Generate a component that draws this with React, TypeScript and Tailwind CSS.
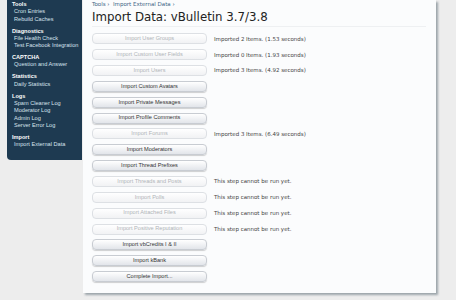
const sidebar = [
  { title: "Tools", items: ["Cron Entries", "Rebuild Caches"] },
  { title: "Diagnostics", items: ["File Health Check", "Test Facebook Integration"] },
  { title: "CAPTCHA", items: ["Question and Answer"] },
  { title: "Statistics", items: ["Daily Statistics"] },
  { title: "Logs", items: ["Spam Cleaner Log", "Moderator Log", "Admin Log", "Server Error Log"] },
  { title: "Import", items: ["Import External Data"] },
];

const steps: { label: string; enabled: boolean; note?: string }[] = [
  { label: "Import User Groups", enabled: false, note: "Imported 2 Items. (1.53 seconds)" },
  { label: "Import Custom User Fields", enabled: false, note: "Imported 0 Items. (1.93 seconds)" },
  { label: "Import Users", enabled: false, note: "Imported 3 Items. (4.92 seconds)" },
  { label: "Import Custom Avatars", enabled: true },
  { label: "Import Private Messages", enabled: true },
  { label: "Import Profile Comments", enabled: true },
  { label: "Import Forums", enabled: false, note: "Imported 3 Items. (6.49 seconds)" },
  { label: "Import Moderators", enabled: true },
  { label: "Import Thread Prefixes", enabled: true },
  { label: "Import Threads and Posts", enabled: false, note: "This step cannot be run yet." },
  { label: "Import Polls", enabled: false, note: "This step cannot be run yet." },
  { label: "Import Attached Files", enabled: false, note: "This step cannot be run yet." },
  { label: "Import Positive Reputation", enabled: false, note: "This step cannot be run yet." },
  { label: "Import vbCredits I & II", enabled: true },
  { label: "Import kBank", enabled: true },
  { label: "Complete Import...", enabled: true },
];

const narrow = { fontFamily: '"Liberation Sans", Arial, sans-serif' };

export default function App() {
  return (
    <div
      className="w-[456px] h-[300px] overflow-hidden bg-[#ededed] flex items-start pl-[7px]"
      style={{ fontFamily: '"DejaVu Sans", "Liberation Sans", sans-serif' }}
    >
      {/* Admin sidebar */}
      <nav
        className="w-[75px] h-[160px] shrink-0 bg-[#1e3a51] rounded-bl-[4px] pl-[5px] pt-[1px] text-[5.6px]"
        style={narrow}
      >
        {sidebar.map((group) => (
          <div key={group.title} className="mb-[4.7px]">
            <div className="h-[7.3px] leading-[7.3px] font-bold text-white">{group.title}</div>
            {group.items.map((item) => (
              <div key={item} className="h-[7.3px] leading-[7.3px] pl-[2px] text-[#d6e2ec] whitespace-nowrap">
                {item}
              </div>
            ))}
          </div>
        ))}
      </nav>

      {/* Content panel */}
      <main className="w-[353px] h-[293px] shrink-0 ml-[1px] bg-[#fbfcfd] shadow-[2px_2px_2px_rgba(60,80,90,0.45)] pl-[9px] pr-[10px]">
        <div className="pt-[1px] text-[5.5px] leading-[7px] text-[#3d6486] whitespace-nowrap">
          Tools ›&nbsp;&nbsp;Import External Data ›
        </div>
        <h1 className="text-[11.8px] leading-[16px] pt-[1px] text-[#222] border-b border-[#eef0f2] pb-[1px]">
          Import Data: vBulletin 3.7/3.8
        </h1>

        <div className="mt-[4px] flex flex-col">
          {steps.map((s) => (
            <div key={s.label} className="h-[15.85px] flex items-center">
              <button
                style={narrow}
                className={
                  s.enabled
                    ? "w-[115px] h-[11px] rounded-[4px] border border-[#c8ccd2] bg-gradient-to-b from-white to-[#e2e5ea] shadow-[0_1px_1px_rgba(0,0,0,0.18)] text-[5.6px] leading-none text-[#333]"
                    : "w-[115px] h-[11px] rounded-[4px] border border-[#dde0e4] bg-gradient-to-b from-white to-[#f1f2f4] text-[5.6px] leading-none text-[#b0b4b8]"
                }
              >
                {s.label}
              </button>
              {s.note && (
                <span className="ml-[7px] text-[5.5px] text-[#444] whitespace-nowrap">{s.note}</span>
              )}
            </div>
          ))}
        </div>
      </main>
    </div>
  );
}
